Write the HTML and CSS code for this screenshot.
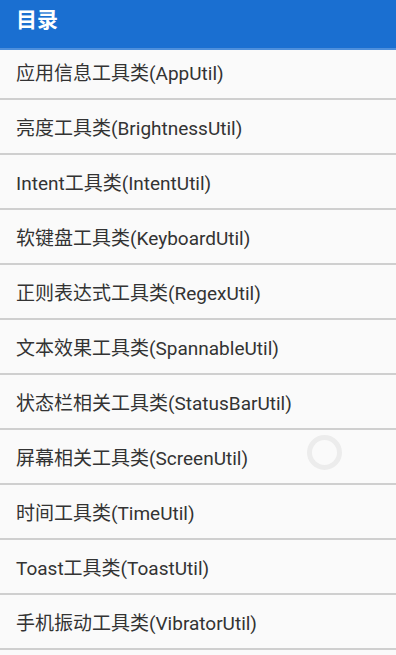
FILE: index.html
```html
<!DOCTYPE html>
<html lang="zh-CN">
<head>
    <meta charset="UTF-8">
    <meta name="viewport" content="width=device-width, initial-scale=1.0">
    <title>目录</title>
    <link rel="stylesheet" href="styles.css">
</head>
<body>
    <div class="toolbar">目录</div>
    <ul class="menu-list">
        <li>应用信息工具类(AppUtil)</li>
        <li>亮度工具类(BrightnessUtil)</li>
        <li>Intent工具类(IntentUtil)</li>
        <li>软键盘工具类(KeyboardUtil)</li>
        <li>正则表达式工具类(RegexUtil)</li>
        <li>文本效果工具类(SpannableUtil)</li>
        <li>状态栏相关工具类(StatusBarUtil)</li>
        <li>屏幕相关工具类(ScreenUtil)</li>
        <li>时间工具类(TimeUtil)</li>
        <li>Toast工具类(ToastUtil)</li>
        <li>手机振动工具类(VibratorUtil)</li>
    </ul>
    <div class="spinner"></div>
</body>
</html>
```

FILE: styles.css
```css
body {
    margin: 0;
    padding: 0;
    background-color: #fafafa;
    font-family: Roboto, "Noto Sans CJK SC", sans-serif;
    overflow: hidden;
    height: 655px;
}

.toolbar {
    position: relative;
    z-index: 2;
    height: 50px;
    line-height: 41px;
    padding-left: 16px;
    background-color: #1a6fd1;
    border-bottom: 2px solid #4d8fdc;
    box-sizing: border-box;
    color: white;
    font-size: 21px;
    font-weight: bold;
}

.menu-list {
    list-style: none;
    margin: -5px 0 0 0;
    padding: 0;
}

.menu-list li {
    height: 53px;
    line-height: 57px;
    padding-left: 16px;
    border-bottom: 2px solid #cfcfcf;
    color: #333;
    font-size: 19px;
}

.spinner {
    position: absolute;
    left: 307px;
    top: 435px;
    width: 25px;
    height: 25px;
    border: 5px solid #ececec;
    border-radius: 50%;
}
```
